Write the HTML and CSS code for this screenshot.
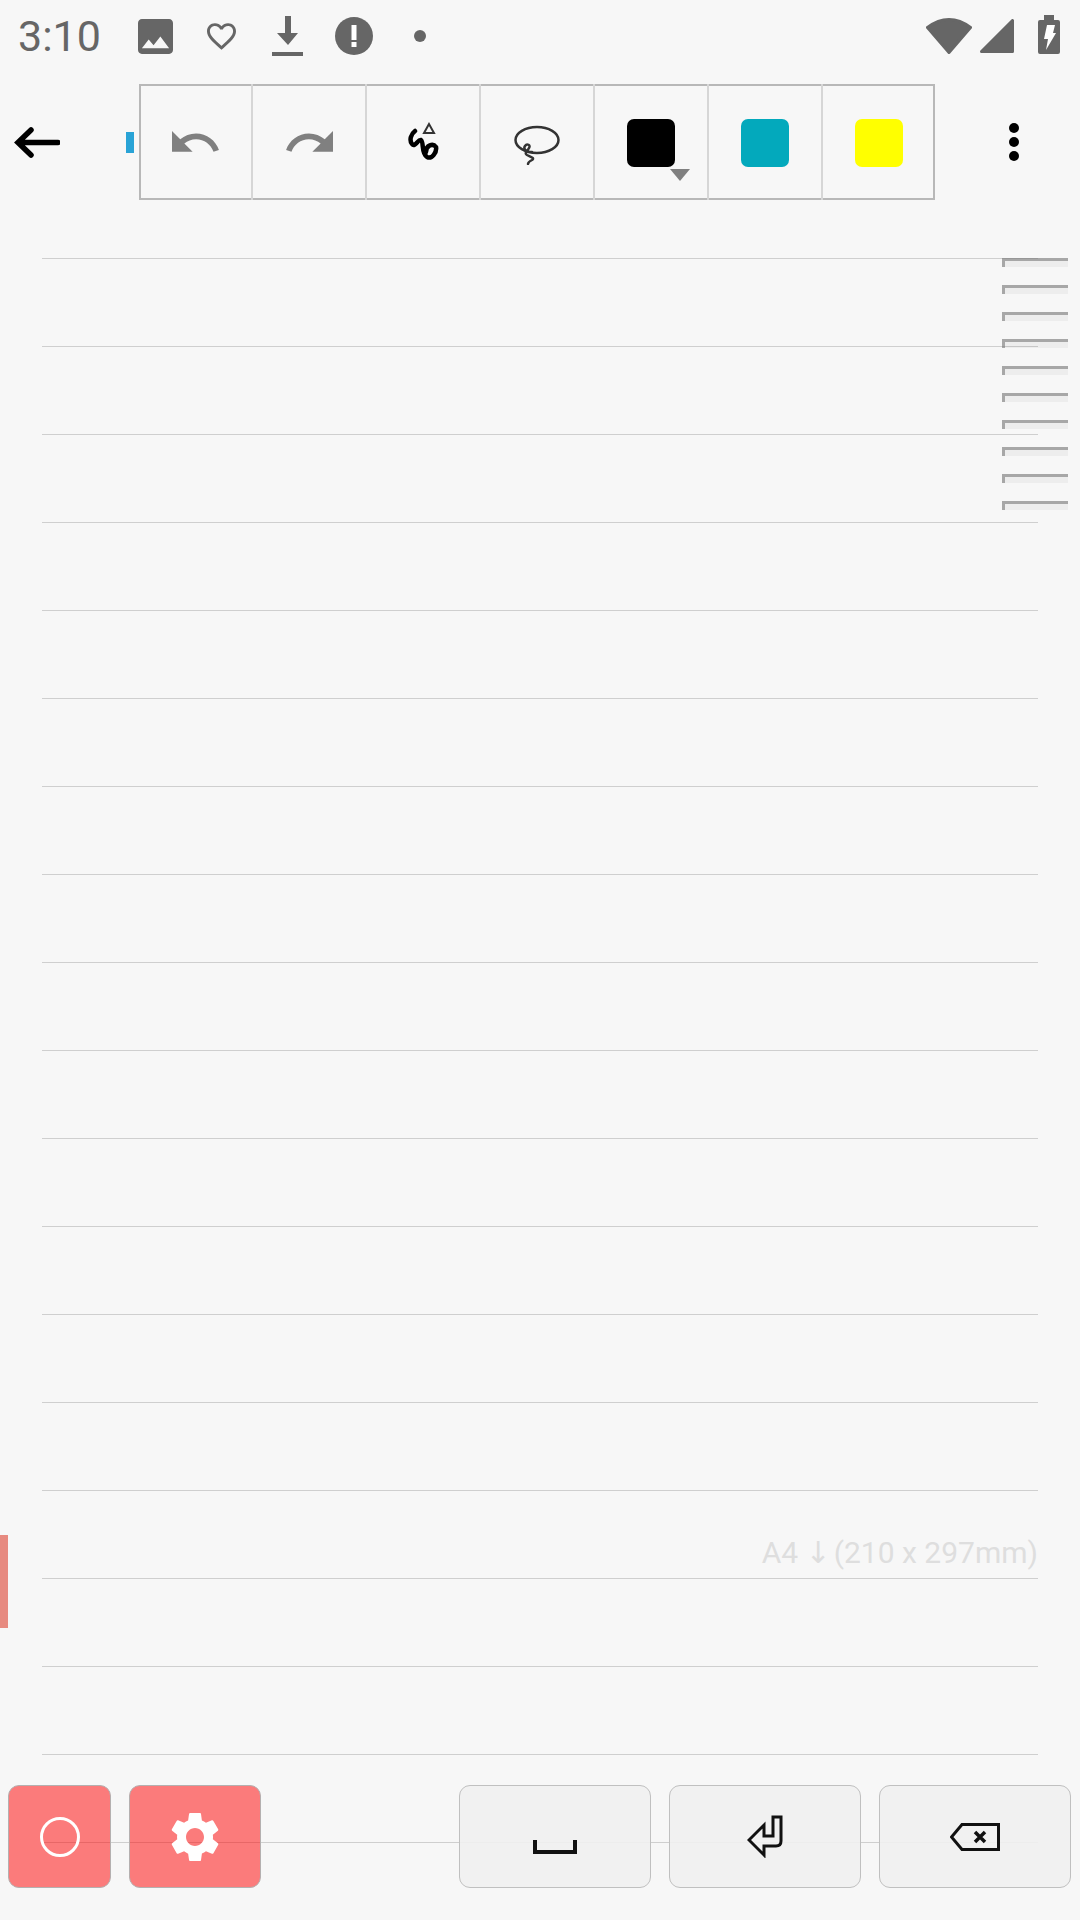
FILE: index.html

```html
<!DOCTYPE html>
<html lang="en">
<head>
    <meta charset="UTF-8">
    <meta name="viewport" content="width=device-width, initial-scale=1.0">
    <title>Note</title>
    <link rel="stylesheet" href="styles.css">
</head>
<body>
    <div class="status-bar">
        <span class="time">3:10</span>
        <div class="slot">
            <svg width="35" height="35" viewBox="3 3 18 18"><path class="grey" d="M21 19V5c0-1.1-.9-2-2-2H5c-1.1 0-2 .9-2 2v14c0 1.100.9 2 2 2h14c1.100 0 2-.9 2-2zM8.500 13.500l2.500 3.010L14.500 12l4.500 6H5l3.500-4.500z"/></svg>
        </div>
        <div class="slot">
            <svg width="29" height="27" viewBox="2 3 20 18.350"><path class="grey" d="M16.500 3c-1.740 0-3.410.81-4.500 2.090C10.910 3.810 9.240 3 7.500 3 4.420 3 2 5.420 2 8.500c0 3.780 3.400 6.860 8.550 11.540L12 21.350l1.450-1.320C18.600 15.360 22 12.280 22 8.500 22 5.420 19.580 3 16.500 3zm-4.400 15.550l-.1.1-.1-.1C7.140 14.240 4 11.390 4 8.500 4 6.500 5.500 5 7.500 5c1.540 0 3.040.99 3.570 2.360h1.870C13.460 5.990 14.960 5 16.500 5c2 0 3.500 1.500 3.500 3.500 0 2.890-3.140 5.740-7.900 10.050z"/></svg>
        </div>
        <div class="slot">
            <svg width="31" height="40" viewBox="0 0 31 40"><path class="grey" d="M13 0h6v17h7L16 29 5 17h8zM0 36h31v4H0z"/></svg>
        </div>
        <div class="slot">
            <svg width="38" height="38" viewBox="0 0 38 38"><circle class="grey" cx="19" cy="19" r="19"/><rect class="white" x="16.500" y="8" width="5" height="15"/><rect class="white" x="16.500" y="25" width="5" height="5"/></svg>
        </div>
        <div class="slot">
            <span class="notif-dot"></span>
        </div>
        <div class="status-right">
            <svg width="46" height="36" viewBox="0 0 46 36"><path class="grey stroked" d="M23 34.500L1.500 9.500Q12 1.500 23 1.500T44.500 9.500Z"/></svg>
            <svg width="34" height="34" viewBox="0 0 34 34"><path class="grey stroked" d="M1.500 32.500L32.500 1.500V32.500Z"/></svg>
            <svg class="battery" width="22" height="39" viewBox="0 0 22 39"><path class="grey" d="M6 0h10v5h4a2 2 0 0 1 2 2v30a2 2 0 0 1-2 2H2a2 2 0 0 1-2-2V7a2 2 0 0 1 2-2h4z"/><path class="white" d="M9 10h8l-2 8h3L8 35l2-11H6z"/></svg>
        </div>
    </div>

    <div class="action-row">
        <svg class="back" width="46" height="32" viewBox="0 0 46 32"><path d="M44 16.500H6M17 4L4 16.500 17 29" fill="none" stroke="#000" stroke-width="5.500" stroke-linecap="round"/></svg>
        <span class="tick"></span>
        <div class="toolbar">
            <div class="tool">
                <svg width="47" height="22" viewBox="2 7 20.500 9.500"><path class="mid" d="M12.500 8c-2.650 0-5.050.99-6.900 2.600L2 7v9h9l-3.620-3.620c1.390-1.160 3.160-1.880 5.120-1.880 3.540 0 6.550 2.310 7.600 5.500l2.370-.78C21.080 11.030 17.150 8 12.500 8z"/></svg>
            </div>
            <div class="tool">
                <svg width="47" height="22" viewBox="1.500 7 20.500 9.500"><path class="mid" d="M18.400 10.600C16.550 8.990 14.150 8 11.500 8c-4.650 0-8.580 3.030-9.960 7.220L3.900 16c1.050-3.190 4.050-5.500 7.600-5.500 1.950 0 3.730.72 5.120 1.880L13 16h9V7l-3.600 3.600z"/></svg>
            </div>
            <div class="tool">
                <svg width="32" height="42" viewBox="0 0 32 42">
                    <path d="M8 10C4 13 2 19 5 23 8 27 11 18 14 19 17 21 14 32 20 36 25 38.500 30 31 29 26 26 22 19 24 19 31" fill="none" stroke="#000" stroke-width="4.500" stroke-linecap="round"/>
                    <path d="M22 3L17 12H27Z" fill="none" stroke="#333" stroke-width="2"/>
                </svg>
            </div>
            <div class="tool">
                <svg width="50" height="46" viewBox="0 0 50 46">
                    <ellipse cx="25" cy="21" rx="21.500" ry="13" fill="none" stroke="#333" stroke-width="2.500"/>
                    <path d="M20 33C14 33 11 30 13 27 15 24 19 26 17 29 15 33 12 34 15 36 19 38 23 39 20 41 18 42 16 43 16 45" fill="none" stroke="#333" stroke-width="2.500" stroke-linecap="round"/>
                </svg>
            </div>
            <div class="tool">
                <span class="swatch swatch-black"></span>
                <span class="caret"></span>
            </div>
            <div class="tool">
                <span class="swatch swatch-teal"></span>
            </div>
            <div class="tool">
                <span class="swatch swatch-yellow"></span>
            </div>
        </div>
        <div class="menu">
            <span></span>
            <span></span>
            <span></span>
        </div>
    </div>

    <div class="page">
        <div class="rule"></div>
        <div class="rule"></div>
        <div class="rule"></div>
        <div class="rule"></div>
        <div class="rule"></div>
        <div class="rule"></div>
        <div class="rule"></div>
        <div class="rule"></div>
        <div class="rule"></div>
        <div class="rule"></div>
        <div class="rule"></div>
        <div class="rule"></div>
        <div class="rule"></div>
        <div class="rule"></div>
        <div class="rule rule-label"><span>A4 <span class="down">↓</span>(210 x 297mm)</span></div>
        <div class="rule"></div>
        <div class="rule"></div>
        <div class="rule"></div>
        <div class="rule"></div>
    </div>

    <div class="page-ticks">
        <span></span><span></span><span></span><span></span><span></span>
        <span></span><span></span><span></span><span></span><span></span>
    </div>

    <div class="side-marker"></div>

    <div class="keys">
        <button class="key key-red key-small">
            <svg width="42" height="42" viewBox="0 0 42 42"><circle cx="21" cy="21" r="18.500" fill="none" stroke="#fff" stroke-width="3"/></svg>
        </button>
        <button class="key key-red key-medium">
            <svg width="48" height="50" viewBox="2.500 2 19 20"><path class="white" d="M19.140 12.940c.04-.3.06-.61.06-.94 0-.32-.02-.64-.07-.94l2.030-1.580c.18-.14.23-.41.12-.61l-1.920-3.320c-.12-.22-.37-.29-.59-.22l-2.390.96c-.5-.38-1.030-.7-1.620-.94l-.36-2.540c-.04-.24-.24-.41-.48-.41h-3.840c-.24 0-.43.17-.47.41l-.36 2.540c-.59.24-1.130.57-1.620.94l-2.390-.96c-.22-.08-.47 0-.59.22L2.740 8.870c-.12.21-.08.47.12.61l2.030 1.580c-.05.3-.07.62-.07.94s.02.64.07.94l-2.030 1.580c-.18.14-.23.41-.12.61l1.920 3.320c.12.22.37.29.59.22l2.390-.96c.5.38 1.030.7 1.620.94l.36 2.540c.05.24.24.41.48.41h3.840c.24 0 .44-.17.47-.41l.36-2.540c.59-.24 1.130-.56 1.620-.94l2.390.96c.22.08.47 0 .59-.22l1.920-3.320c.12-.22.07-.47-.12-.61l-2.010-1.580zM12 15.600c-1.980 0-3.600-1.620-3.600-3.600s1.620-3.600 3.600-3.600 3.600 1.620 3.600 3.600-1.620 3.600-3.600 3.600z"/></svg>
        </button>
        <button class="key key-grey key-space">
            <svg class="space-icon" width="44" height="14" viewBox="0 0 44 14"><path d="M2 0v12h40V0" fill="none" stroke="#111" stroke-width="4"/></svg>
        </button>
        <button class="key key-grey">
            <svg width="36" height="43" viewBox="0 0 36 43"><path d="M34 2V26Q34 31 29 31H17V40L2 25 17 10V21H26V2Z" fill="none" stroke="#111" stroke-width="3"/></svg>
        </button>
        <button class="key key-grey">
            <svg width="50" height="28" viewBox="0 0 50 28"><path d="M48.500 1.500H12L1.500 14 12 26.500H48.500Z" fill="none" stroke="#111" stroke-width="3"/><path d="M25 9L35 19M35 9L25 19" fill="none" stroke="#111" stroke-width="3.500"/></svg>
        </button>
    </div>
</body>
</html>
```

FILE: styles.css

```css
html, body {
    margin: 0;
    padding: 0;
}
body {
    position: relative;
    width: 1080px;
    height: 1920px;
    overflow: hidden;
    background-color: #f7f7f7;
    font-family: Roboto, sans-serif;
}
svg {
    display: block;
}
.grey {
    fill: #666;
}
.stroked {
    stroke: #666;
    stroke-width: 3;
    stroke-linejoin: round;
}
.white {
    fill: #fff;
}
.mid {
    fill: #808080;
}

/* status bar */
.status-bar {
    display: flex;
    align-items: center;
    height: 72px;
    padding-left: 18px;
    padding-right: 20px;
    color: #666;
}
.time {
    width: 104.5px;
    font-size: 43px;
}
.slot {
    display: flex;
    align-items: center;
    justify-content: center;
    width: 66px;
}
.notif-dot {
    width: 12px;
    height: 12px;
    border-radius: 50%;
    background: #666;
}
.status-right {
    display: flex;
    align-items: center;
    gap: 8px;
    margin-left: auto;
}
.battery {
    margin-left: 16px;
    margin-top: -3px;
}

/* action row */
.action-row {
    display: flex;
    align-items: center;
    height: 140px;
    padding-left: 14px;
}
.back {
    margin-right: 66px;
}
.tick {
    width: 8px;
    height: 21px;
    margin-right: 5px;
    background: #29a3d6;
}
.toolbar {
    display: flex;
    width: 796px;
    height: 116px;
    box-shadow: inset 0 0 0 2px #b8b8b8;
}
.tool {
    position: relative;
    box-sizing: border-box;
    display: flex;
    align-items: center;
    justify-content: center;
    width: 114px;
    border-right: 2px solid #d6d6d6;
}
.tool:last-child {
    flex: 1;
    border-right: none;
}
.swatch {
    width: 48px;
    height: 48px;
    margin-top: 2px;
    border-radius: 7px;
}
.swatch-black {
    background: #000;
}
.swatch-teal {
    background: #03a9bc;
}
.swatch-yellow {
    background: #ff0;
}
.caret {
    position: absolute;
    left: 75px;
    top: 85px;
    border-left: 10.5px solid transparent;
    border-right: 10.5px solid transparent;
    border-top: 12px solid #808080;
}
.menu {
    display: flex;
    flex-direction: column;
    gap: 4px;
    margin-left: 74px;
}
.menu span {
    width: 10px;
    height: 10px;
    border-radius: 50%;
    background: #000;
}

/* ruled page */
.page {
    margin-top: 46px;
    padding: 0 42px;
}
.rule {
    box-sizing: border-box;
    height: 88px;
    border-top: 1px solid #cfcfcf;
}
.rule-label {
    display: flex;
    align-items: flex-end;
    justify-content: flex-end;
    padding-bottom: 7px;
    color: #dedede;
    font-size: 30px;
    line-height: 36px;
    white-space: pre;
}
.down {
    margin-right: 3px;
    font-family: "DejaVu Sans", sans-serif;
}

/* overlays */
.page-ticks {
    position: absolute;
    left: 1002px;
    top: 258px;
    display: flex;
    flex-direction: column;
    gap: 18px;
}
.page-ticks span {
    box-sizing: border-box;
    width: 66px;
    height: 9px;
    border-top: 3px solid rgba(120, 120, 120, 0.6);
    border-left: 3px solid rgba(120, 120, 120, 0.6);
    background: rgba(0, 0, 0, 0.04);
}
.side-marker {
    position: absolute;
    left: 0;
    top: 1535px;
    width: 8px;
    height: 93px;
    background: #e78a80;
}
.keys {
    position: absolute;
    left: 8px;
    right: 9px;
    top: 1785px;
    display: flex;
    gap: 18px;
}
.key {
    box-sizing: border-box;
    display: flex;
    align-items: center;
    justify-content: center;
    width: 192px;
    height: 103px;
    padding: 0;
    border-radius: 11px;
}
.key-red {
    background: rgba(255, 0, 0, 0.5);
    border: 1px solid #b4b0b0;
}
.key-grey {
    background: rgba(240, 240, 240, 0.9);
    border: 1px solid #c0c0c0;
}
.key-small {
    width: 103px;
}
.key-medium {
    width: 132px;
}
.key-space {
    margin-left: auto;
}
.space-icon {
    margin-top: 21px;
}
```
